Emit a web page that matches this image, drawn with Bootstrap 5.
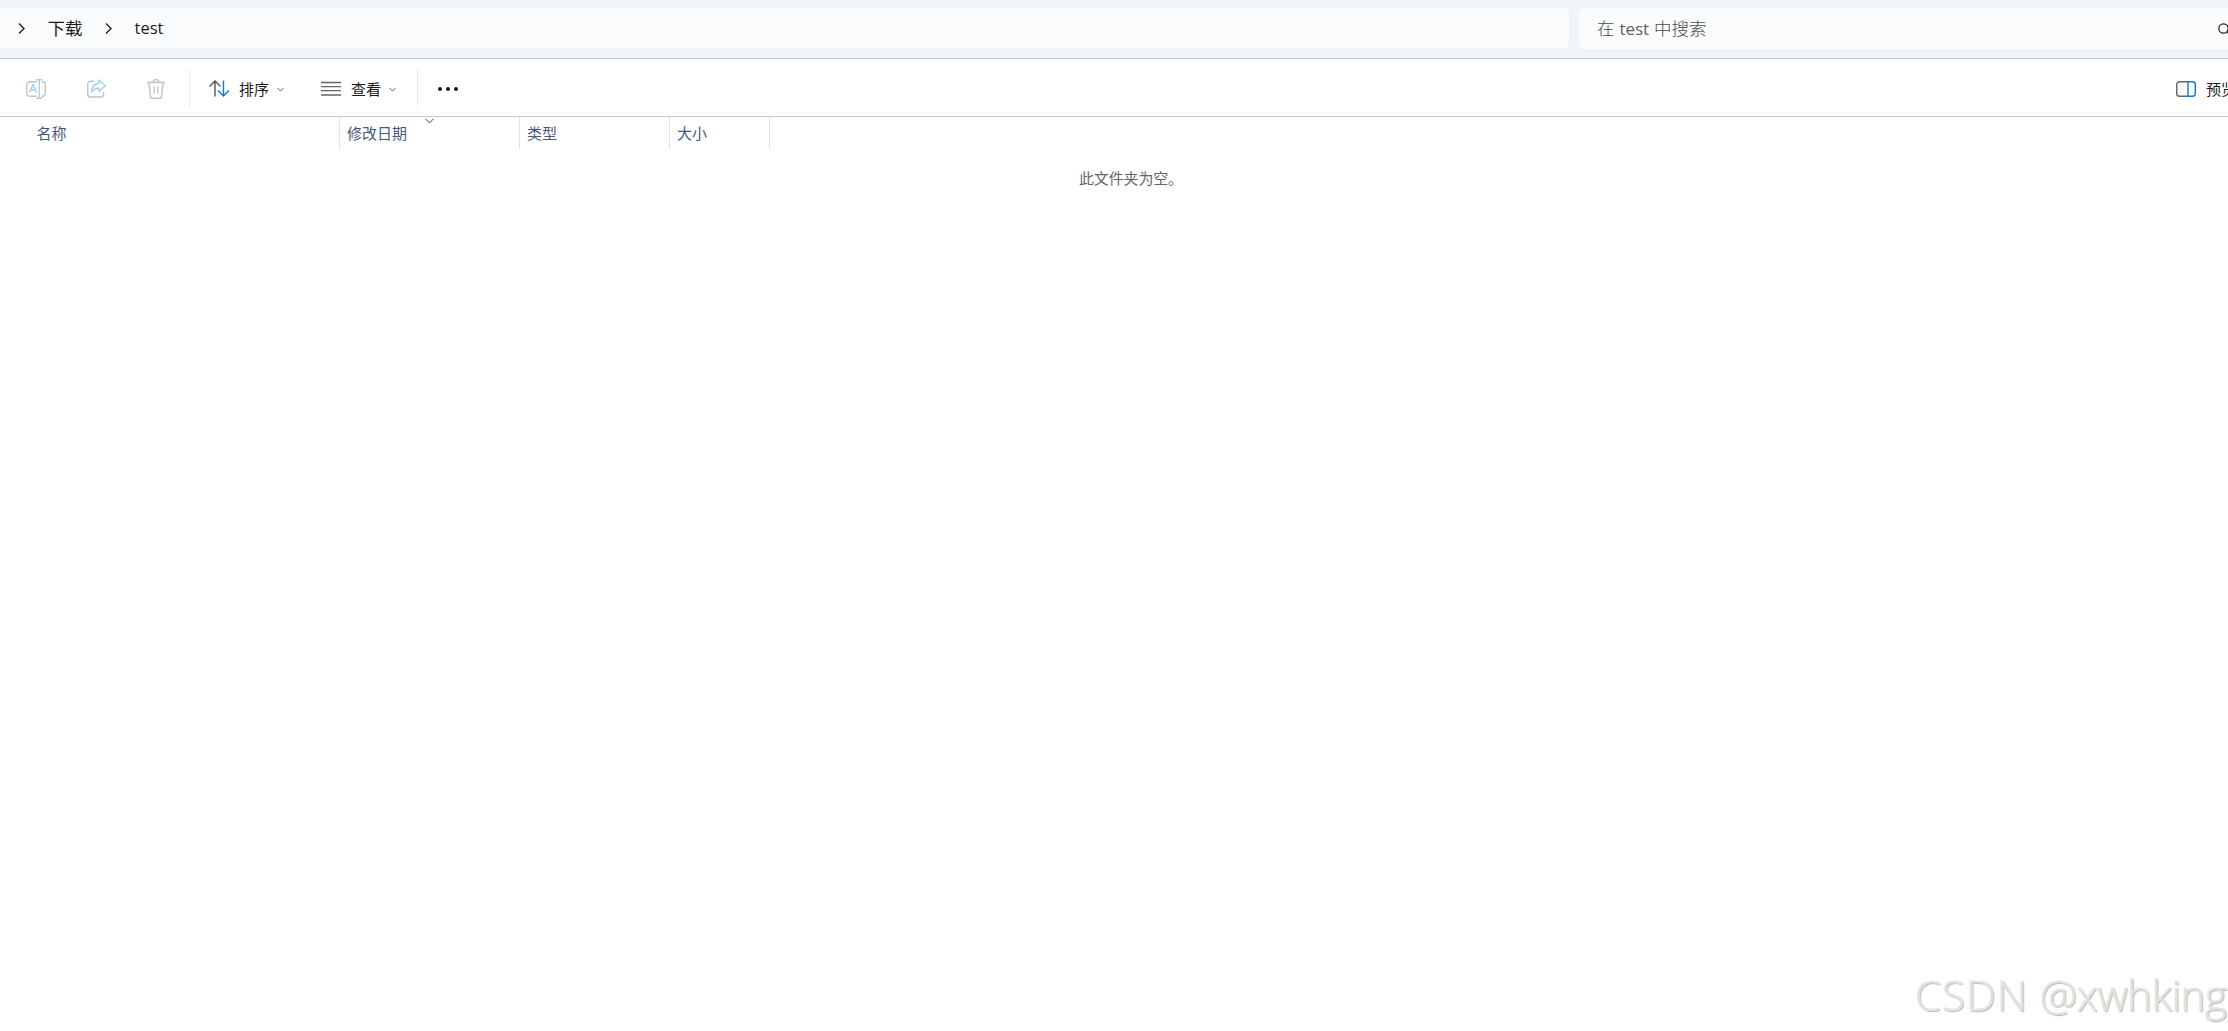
<!DOCTYPE html>
<html lang="zh-CN">
<head>
<meta charset="utf-8">
<title>test</title>
<link rel="stylesheet" href="https://cdn.jsdelivr.net/npm/bootstrap@5.3.0/dist/css/bootstrap.min.css">
<style>
body{font-family:"Noto Sans CJK SC",sans-serif;font-size:15px;line-height:20px;color:#1b1b1b;height:1031px}
svg{display:block;flex:none;fill:none;overflow:visible}
.latin{font-family:"Open Sans","Noto Sans",sans-serif;font-size:16.5px}
.topbar{height:59px;background:#eff4f9;border-bottom:1px solid #b9cad9;gap:10px}
.path-box,.search-box{background:#fbfcfe;margin-top:8px;font-size:17.5px}
.path-box{width:1569px;height:40px;border-radius:0 6px 6px 0;padding-left:18px;gap:22.5px}
.search-box{height:41px;border-radius:6px 0 0 6px;padding-left:18px;color:#4c4c4c;font-weight:300}
.search-box .latin{font-size:17px;font-weight:400;color:#5f5f5f;margin:0 1px}
.toolbar{height:58px;border-bottom:1px solid #b9cad9;padding:2px 0 0 26px}
.edit-tools{gap:41px}
.tool-item{gap:9px}
.tool-item .chev{margin:1px 0 0 -1px}
.sort-item{margin:0 37px 0 19px}
.preview-item{gap:10px}
.sep{width:1px;height:39px;background:#ebebeb}
.sep-a{margin-left:24px}.sep-b{margin:0 20px 0 21px}
.preview-label{width:22px}
.heads{height:32px;color:#46597a}
.heads>div{border-right:1px solid #e3e3e3;padding:6px 0 0 7px;position:relative}
.heads .c-name{width:340px;padding-left:36.5px}
.heads .c-date{width:180px}.heads .c-type{width:150px}.heads .c-size{width:100px}
.sort-mark{position:absolute;left:85px;top:1px}
.empty-note{color:#666;margin-top:19px;padding-left:1079px;letter-spacing:-.15px}
.wmark{position:absolute;left:1915px;top:965px;font:300 42px/60px "Open Sans",sans-serif;color:#e2e2e2;-webkit-text-stroke:.6px #e2e2e2;text-shadow:1px 1px 1px #aaa;white-space:nowrap;letter-spacing:-.4px}
.wmark span{letter-spacing:1px}
</style>
<script src="https://cdn.jsdelivr.net/npm/bootstrap@5.3.0/dist/js/bootstrap.bundle.min.js"></script>
</head>
<body class="bg-white overflow-hidden position-relative">
<header class="topbar d-flex">
  <nav class="path-box d-flex align-items-center">
    <svg width="7" height="12" viewBox="0 0 7 12" stroke="#222" stroke-width="1.4"><path d="M1 1.500l5 5-5 5"/></svg>
    <span>下载</span>
    <svg width="7" height="12" viewBox="0 0 7 12" stroke="#222" stroke-width="1.4"><path d="M1 1.500l5 5-5 5"/></svg>
    <span class="latin">test</span>
  </nav>
  <div class="search-box d-flex align-items-center flex-grow-1">
    <span>在 <span class="latin">test</span> 中搜索</span>
    <svg class="ms-auto" width="11" height="14" viewBox="0 0 11 14" stroke="#222" stroke-width="1.2"><circle cx="6.500" cy="6.5" r="4.700"/><path d="M9.800 9.800l4 4"/></svg>
  </div>
</header>
<div class="toolbar d-flex align-items-center">
  <div class="edit-tools d-flex align-items-center">
    <svg width="20" height="20" viewBox="0 0 20 20" stroke="#c4c4c4" stroke-width="1.4"><path d="M11 2.700H3.500a2.800 2.800 0 0 0-2.800 2.800v9a2.800 2.800 0 0 0 2.800 2.800H11M15.500 2.700h1a2.800 2.800 0 0 1 2.800 2.800v9a2.800 2.800 0 0 1-2.800 2.800h-1"/><path stroke="#a3d0f2" d="M3.500 13.500L7 5.500l3.500 8M4.800 11h4.400M13.300 .7v18.600M10.300 .7h6M10.300 19.300h6"/></svg>
    <svg width="19" height="19" viewBox="0 0 19 19" stroke="#c4c4c4" stroke-width="1.4"><path d="M7 2.200H3.500A2.800 2.800 0 0 0 .7 5v10.200A2.800 2.800 0 0 0 3.500 18h10.300a2.800 2.800 0 0 0 2.800-2.800V13"/><path stroke="#a3d0f2" stroke-linejoin="round" d="M12 1l6.300 5.800L12 12.500V9.200C8.500 9 6.500 10.200 4.500 12.800 5 7.800 7.500 4.700 12 4.300z"/></svg>
    <svg width="18" height="20" viewBox="0 0 18 20" stroke="#c4c4c4" stroke-width="1.4"><path d="M0 3.500h18M6 3.500a3 3 0 0 1 6 0M2 3.500l1.400 13.600a2.300 2.300 0 0 0 2.300 2.200h6.600a2.300 2.300 0 0 0 2.300-2.200L16 3.500M7.200 7.500v7M10.800 7.500v7"/></svg>
  </div>
  <span class="sep sep-a"></span>
  <div class="tool-item sort-item d-flex align-items-center">
    <svg width="21" height="17" viewBox="0 0 21 17" stroke="#555" stroke-width="1.4"><path d="M.5 6.500L6 1l5.500 5.500M6 1v15.500"/><path stroke="#0f7bd4" d="M9 10.500l5.500 5.500 5.300-5.500M14.500 16V.5"/></svg>
    <span>排序</span>
    <svg class="chev" width="7" height="5" viewBox="0 0 7 5" stroke="#666"><path d="M.5 1l3 3 3-3"/></svg>
  </div>
  <div class="tool-item d-flex align-items-center">
    <svg width="21" height="14" viewBox="0 0 21 14" stroke="#666" stroke-width="1.300"><path d="M0 .5h20M0 4.700h20M0 8.700h20M0 13h20"/></svg>
    <span>查看</span>
    <svg class="chev" width="7" height="5" viewBox="0 0 7 5" stroke="#666"><path d="M.5 1l3 3 3-3"/></svg>
  </div>
  <span class="sep sep-b"></span>
  <svg width="20" height="4" viewBox="0 0 20 4"><g fill="#1b1b1b"><circle cx="2" cy="2" r="2"/><circle cx="10" cy="2" r="2"/><circle cx="18" cy="2" r="2"/></g></svg>
  <div class="tool-item preview-item d-flex align-items-center ms-auto">
    <svg width="20" height="16" viewBox="0 0 20 16" stroke="#666" stroke-width="1.400"><path fill="#f7f7f7" d="M12 .7H3.500A2.800 2.800 0 0 0 .7 3.500v9a2.800 2.800 0 0 0 2.800 2.800H12"/><path stroke="#0f7bd4" d="M12 .7h4.500a2.800 2.800 0 0 1 2.800 2.800v9a2.800 2.800 0 0 1-2.800 2.800H12z"/></svg>
    <span class="preview-label text-nowrap overflow-hidden">预览</span>
  </div>
</div>
<div class="heads d-flex">
  <div class="c-name">名称</div>
  <div class="c-date">修改日期<svg class="sort-mark" width="9" height="6" viewBox="0 0 9 6" stroke="#444"><path d="M.3 .7l4.200 4.200L8.700 .7"/></svg></div>
  <div class="c-type">类型</div>
  <div class="c-size">大小</div>
</div>
<div class="empty-note">此文件夹为空。</div>
<div class="wmark"><span>CSDN </span>@xwhking</div>
</body>
</html>
